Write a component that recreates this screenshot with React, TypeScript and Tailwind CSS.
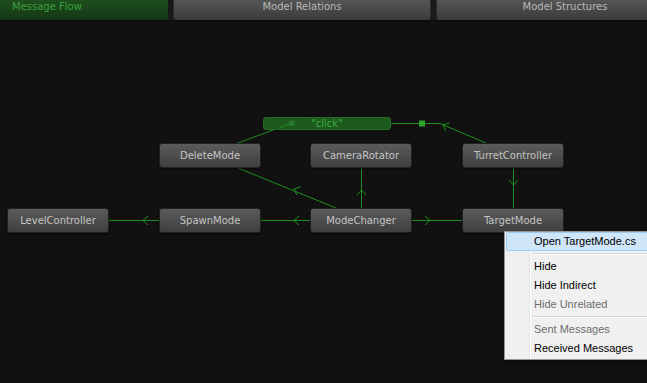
import React from "react";

type Node = { name: string; x: number; y: number };

// canvas coordinates (canvas starts below the 21px tab bar)
const nodes: Node[] = [
  { name: "DeleteMode", x: 159, y: 122 },
  { name: "CameraRotator", x: 310, y: 122 },
  { name: "TurretController", x: 462, y: 122 },
  { name: "LevelController", x: 7, y: 187 },
  { name: "SpawnMode", x: 159, y: 187 },
  { name: "ModeChanger", x: 310, y: 187 },
  { name: "TargetMode", x: 462, y: 187 },
];

const GREEN = "#1f8f1f";

// chevron at (x,y) pointing towards angle (deg)
function Chevron({ x, y, angle }: { x: number; y: number; angle: number }) {
  return (
    <g transform={`translate(${x} ${y}) rotate(${angle})`}>
      <path d="M-5 -4.5 L0 0 L-5 4.5" fill="none" stroke={GREEN} strokeWidth={1} />
    </g>
  );
}

function Wires() {
  return (
    <svg className="absolute inset-0" width={647} height={362}>
      <g stroke={GREEN} strokeWidth={1} fill="none">
        <line x1={238} y1={122} x2={292} y2={102} />
        <line x1={391} y1={102.5} x2={440} y2={102.5} />
        <line x1={440} y1={102.5} x2={486} y2={122} />
        <line x1={238} y1={147} x2={336} y2={187} />
        <line x1={361.5} y1={147} x2={361.5} y2={187} />
        <line x1={513.5} y1={147} x2={513.5} y2={187} />
        <line x1={109} y1={199.5} x2={159} y2={199.5} />
        <line x1={261} y1={199.5} x2={310} y2={199.5} />
        <line x1={412} y1={199.5} x2={462} y2={199.5} />
      </g>
      <rect x={419} y={99.5} width={6} height={6} fill="#2aa52a" />
      <Chevron x={443} y={104} angle={-157} />
      <Chevron x={294} y={168} angle={-158} />
      <Chevron x={361.5} y={169} angle={-90} />
      <Chevron x={513.5} y={164} angle={90} />
      <Chevron x={143} y={199.5} angle={180} />
      <Chevron x={294} y={199.5} angle={180} />
      <Chevron x={430} y={199.5} angle={0} />
    </svg>
  );
}

function GraphNode({ node }: { node: Node }) {
  return (
    <div
      className="absolute w-[102px] h-[25px] flex items-center justify-center rounded-[3px] border border-[#222] bg-gradient-to-b from-[#5b5b5b] to-[#3f3f3f] text-[10px] text-[#c4c4c4] shadow-[0_1px_2px_rgba(0,0,0,0.6)]"
      style={{ left: node.x, top: node.y, fontFamily: '"DejaVu Sans", sans-serif' }}
    >
      {node.name}
    </div>
  );
}

function MenuItem({ label, disabled, active }: { label: string; disabled?: boolean; active?: boolean }) {
  return (
    <div
      className={
        "h-[19px] flex items-center pl-[27px] ml-[1px] " +
        (active ? "bg-[#cfe5f8] border border-[#9fcbef] rounded-[2px]" : "border border-transparent") +
        (disabled ? " text-[#6d6d6d]" : " text-black")
      }
    >
      {label}
    </div>
  );
}

function Separator() {
  return (
    <div className="h-[6px] flex items-center pl-[27px]">
      <div className="h-[1px] w-full bg-[#d7d7d7] border-b border-white box-content" />
    </div>
  );
}

export default function App() {
  return (
    <div className="w-[647px] h-[383px] bg-[#111111] overflow-hidden flex flex-col relative">
      <div className="h-[21px] flex gap-[5px] bg-[#1a1a1a] border-b border-[#0a0a0a] leading-[13px]" style={{ fontFamily: '"DejaVu Sans", sans-serif' }}>
        <div className="w-[168px] shrink-0 flex items-start pl-[12px] text-[10px] text-[#3aa03a] bg-gradient-to-b from-[#1e4e1e] to-[#163816] rounded-br-[3px]">
          Message Flow
        </div>
        <div className="w-[258px] shrink-0 flex items-start justify-center text-[10px] text-[#b8b8b8] bg-gradient-to-b from-[#555] to-[#3b3b3b] rounded-b-[3px] border-x border-[#2a2a2a]">
          Model Relations
        </div>
        <div className="w-[258px] shrink-0 flex items-start justify-center text-[10px] text-[#b8b8b8] bg-gradient-to-b from-[#555] to-[#3b3b3b] rounded-b-[3px] border-x border-[#2a2a2a]">
          Model Structures
        </div>
      </div>

      <div className="flex-1 relative">
        <Wires />
        <div
          className="absolute left-[263px] top-[96px] w-[128px] h-[13px] rounded-[3px] bg-[#1d5a1d] border border-[#246b24] flex items-center justify-center text-[10px] text-[#3fae3f]"
          style={{ fontFamily: '"DejaVu Sans", sans-serif' }}
        >
          "click"
        </div>
        <svg className="absolute left-0 top-0 pointer-events-none" width={647} height={362}>
          <line x1={280} y1={106.5} x2={292} y2={102} stroke={GREEN} strokeWidth={1} />
          <rect x={289.5} y={99.5} width={5} height={5} fill="#2a7a2a" />
        </svg>
        {nodes.map((n) => (
          <GraphNode key={n.name} node={n} />
        ))}

        <div
          className="absolute left-[504px] top-[210px] w-[170px] bg-[#f0f0f0] border border-[#979797] pb-[1px] text-[11px] shadow-[2px_2px_3px_rgba(0,0,0,0.5)]"
          style={{ fontFamily: '"Liberation Sans", sans-serif' }}
        >
          <div className="absolute left-[24px] top-0 bottom-0 w-[1px] bg-[#e2e3e3] border-r border-white box-content" />
          <div className="relative">
            <MenuItem label="Open TargetMode.cs" active />
            <Separator />
            <MenuItem label="Hide" />
            <MenuItem label="Hide Indirect" />
            <MenuItem label="Hide Unrelated" disabled />
            <Separator />
            <MenuItem label="Sent Messages" disabled />
            <MenuItem label="Received Messages" />
          </div>
        </div>
      </div>
    </div>
  );
}
